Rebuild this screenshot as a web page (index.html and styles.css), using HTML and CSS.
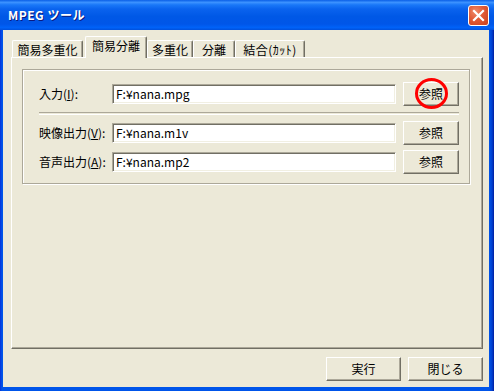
FILE: index.html
```html
<!DOCTYPE html>
<html lang="ja">
<head>
  <meta charset="UTF-8">
  <title>MPEG ツール</title>
  <link rel="stylesheet" href="styles.css">
</head>
<body>

  <div class="window">

    <div class="titlebar">
      <span class="title">MPEG ツール</span>
      <span class="close-button">
        <svg width="13" height="13" viewBox="0 0 13 13">
          <path d="M2 2 L11 11 M11 2 L2 11" stroke="#fff" stroke-width="2.2" stroke-linecap="square"/>
        </svg>
      </span>
    </div>

    <div class="client">

      <div class="tabs">
        <span class="tab tab-1">簡易多重化</span>
        <span class="tab tab-2 active">簡易分離</span>
        <span class="tab tab-3">多重化</span>
        <span class="tab tab-4">分離</span>
        <span class="tab tab-5">結合(ｶｯﾄ)</span>
      </div>

      <div class="page">
        <div class="group">

          <div class="row">
            <label class="field-label">入力(<u>I</u>):</label>
            <div class="textbox">F:¥nana.mpg</div>
            <button class="button browse marked">参照</button>
          </div>

          <div class="separator"></div>

          <div class="row">
            <label class="field-label">映像出力(<u>V</u>):</label>
            <div class="textbox">F:¥nana.m1v</div>
            <button class="button browse">参照</button>
          </div>

          <div class="row row-last">
            <label class="field-label">音声出力(<u>A</u>):</label>
            <div class="textbox">F:¥nana.mp2</div>
            <button class="button browse">参照</button>
          </div>

        </div>
      </div>

      <div class="footer">
        <button class="button action">実行</button>
        <button class="button action">閉じる</button>
      </div>

    </div>
  </div>

</body>
</html>
```

FILE: styles.css
```css
body {
  margin: 0;
  font-family: "Noto Sans CJK JP", sans-serif;
  font-size: 12px;
  color: #000;
  background-color: #ece9d8;
}

.window {
  width: 494px;
  height: 391px;
  display: flex;
  flex-direction: column;
  background: linear-gradient(90deg, #0831d9 0px, #0055ea 2px, #0055ea 489px, #0040d0 492px, #001ea0 494px);
}

/* Title bar */
.titlebar {
  height: 30px;
  display: flex;
  align-items: center;
  justify-content: space-between;
  padding: 0 5px 0 8px;
  box-sizing: border-box;
  background: linear-gradient(180deg, #0a5fe6 0%, #3c92ff 8%, #1a78f8 16%, #0a63ee 30%, #0058e6 55%, #0056e8 80%, #0062f8 92%, #0050dc 100%);
}

.title {
  color: #fff;
  font-weight: bold;
  font-size: 12px;
  letter-spacing: 0.5px;
  text-shadow: 1px 1px 0 #0a1a80;
  margin-top: -1px;
}

.close-button {
  width: 21px;
  height: 21px;
  box-sizing: border-box;
  display: flex;
  align-items: center;
  justify-content: center;
  border: 1px solid #fff;
  border-radius: 3px;
  background: radial-gradient(circle at 35% 30%, #f08a6a 0%, #e05a36 45%, #c9401c 100%);
  margin-top: 1px;
}

/* Client area */
.client {
  flex: 1;
  margin: 0 5px 4px 3px;
  background-color: #ece9d8;
  display: flex;
  flex-direction: column;
}

.tabs {
  height: 27px;
  display: flex;
  align-items: flex-end;
  padding-left: 9px;
  position: relative;
  z-index: 1;
}

.tab {
  height: 17px;
  box-sizing: border-box;
  display: flex;
  align-items: center;
  justify-content: center;
  line-height: 14px;
  padding-top: 1px;
  border-top: 1px solid #fff;
  border-left: 1px solid #fff;
  border-right: 1px solid #716f64;
  border-radius: 2px 2px 0 0;
  box-shadow: inset -1px 0 0 #aca899;
  background-color: #ece9d8;
}

.tab-1 { width: 71px; }
.tab-2 { width: 62px; margin-left: 2px; }
.tab-3 { width: 46px; }
.tab-4 { width: 42px; }
.tab-5 { width: 70px; }

.tab-5 {
  letter-spacing: 0.5px;
}

.tab.active {
  height: 22px;
  margin-bottom: -1px;
  align-items: flex-start;
  padding-top: 2px;
}

.page {
  height: 292px;
  box-sizing: border-box;
  margin: 0 6px 0 8px;
  border-top: 1px solid #fff;
  border-left: 1px solid #fff;
  border-right: 1px solid #716f64;
  border-bottom: 1px solid #716f64;
  box-shadow: inset -1px -1px 0 #aca899;
  padding: 11px 12px 0 10px;
}

.group {
  border: 1px solid #aca899;
  box-shadow: inset 1px 1px 0 #fff, 1px 1px 0 #fff;
  padding: 12px 10px 9px 16px;
}

.row {
  display: flex;
  align-items: center;
  height: 24px;
  margin-bottom: 5px;
}

.row-last {
  margin-bottom: 0;
}

.field-label {
  width: 73px;
  line-height: 14px;
  white-space: nowrap;
}

.textbox {
  width: 284px;
  height: 20px;
  box-sizing: border-box;
  background-color: #fff;
  border: 1px solid;
  border-color: #aca899 #fff #fff #aca899;
  box-shadow: inset 1px 1px 0 #716f64, inset -1px -1px 0 #f1efe2;
  padding-left: 3px;
  line-height: 17px;
  margin-right: 7px;
}

.separator {
  height: 1px;
  border-top: 1px solid #aca899;
  border-bottom: 1px solid #fff;
  margin: 6px 0 6px 0;
  width: 420px;
}

.button {
  font-family: "Noto Sans CJK JP", sans-serif;
  font-size: 12px;
  line-height: 14px;
  color: #000;
  background-color: #ece9d8;
  border: 1px solid;
  border-color: #fff #716f64 #716f64 #fff;
  box-shadow: inset -1px -1px 0 #aca899;
  padding: 0;
  box-sizing: border-box;
  position: relative;
}

.browse {
  width: 56px;
  height: 24px;
}

/* red highlight drawn over the first browse button */
.marked::after {
  content: "";
  position: absolute;
  left: 11px;
  top: -5px;
  width: 33px;
  height: 31px;
  box-sizing: border-box;
  border: 3px solid #f00;
  border-radius: 50%;
}

.footer {
  display: flex;
  justify-content: flex-end;
  gap: 7px;
  margin: 8px 6px 0 0;
}

.action {
  width: 75px;
  height: 24px;
}
```
